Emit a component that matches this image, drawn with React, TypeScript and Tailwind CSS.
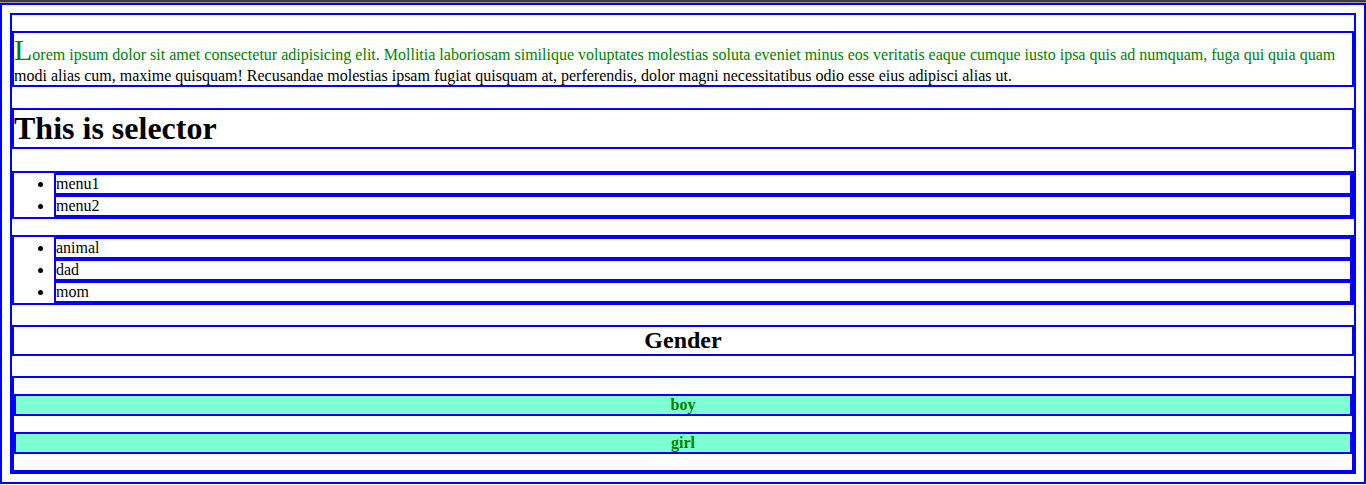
const menus = ["menu1", "menu2"];
const family = ["animal", "dad", "mom"];
const genders = ["boy", "girl"];

export default function App() {
  return (
    <div className="min-h-screen bg-white font-['Liberation_Serif','Times_New_Roman',serif] text-[16px] leading-[normal] text-black">
      <div className="h-[2px] bg-[#3c3c3c]" />
      <div className="h-px bg-[#9c9c9c]" />
      <div className="border-2 border-[#0000ff] p-2">
        <div className="border-2 border-[#0000ff]">
          <p className="my-4 border-2 border-[#0000ff] first-line:text-[#008000] first-letter:text-[30px]">
            Lorem ipsum dolor sit amet consectetur adipisicing elit. Mollitia laboriosam similique voluptates molestias
            soluta eveniet minus eos veritatis eaque cumque iusto ipsa quis ad numquam, fuga qui quia quam modi alias
            cum, maxime quisquam! Recusandae molestias ipsam fugiat quisquam at, perferendis, dolor magni
            necessitatibus odio esse eius adipisci alias ut.
          </p>
          <h1 className="my-[0.67em] border-2 border-[#0000ff] text-[32px] font-bold">This is selector</h1>
          <ul className="my-4 list-disc border-2 border-[#0000ff] pl-10">
            {menus.map((m) => (
              <li key={m} className="border-2 border-[#0000ff]">
                {m}
              </li>
            ))}
          </ul>
          <ul className="my-4 list-disc border-2 border-[#0000ff] pl-10">
            {family.map((m) => (
              <li key={m} className="border-2 border-[#0000ff]">
                {m}
              </li>
            ))}
          </ul>
          <h2 className="my-[0.83em] border-2 border-[#0000ff] text-center text-[24px] font-bold">Gender</h2>
          <div className="border-2 border-[#0000ff]">
            {genders.map((g) => (
              <p key={g} className="my-4 border-2 border-[#0000ff] bg-[#7fffd4] text-center font-bold text-[#008000]">
                {g}
              </p>
            ))}
          </div>
        </div>
      </div>
    </div>
  );
}
